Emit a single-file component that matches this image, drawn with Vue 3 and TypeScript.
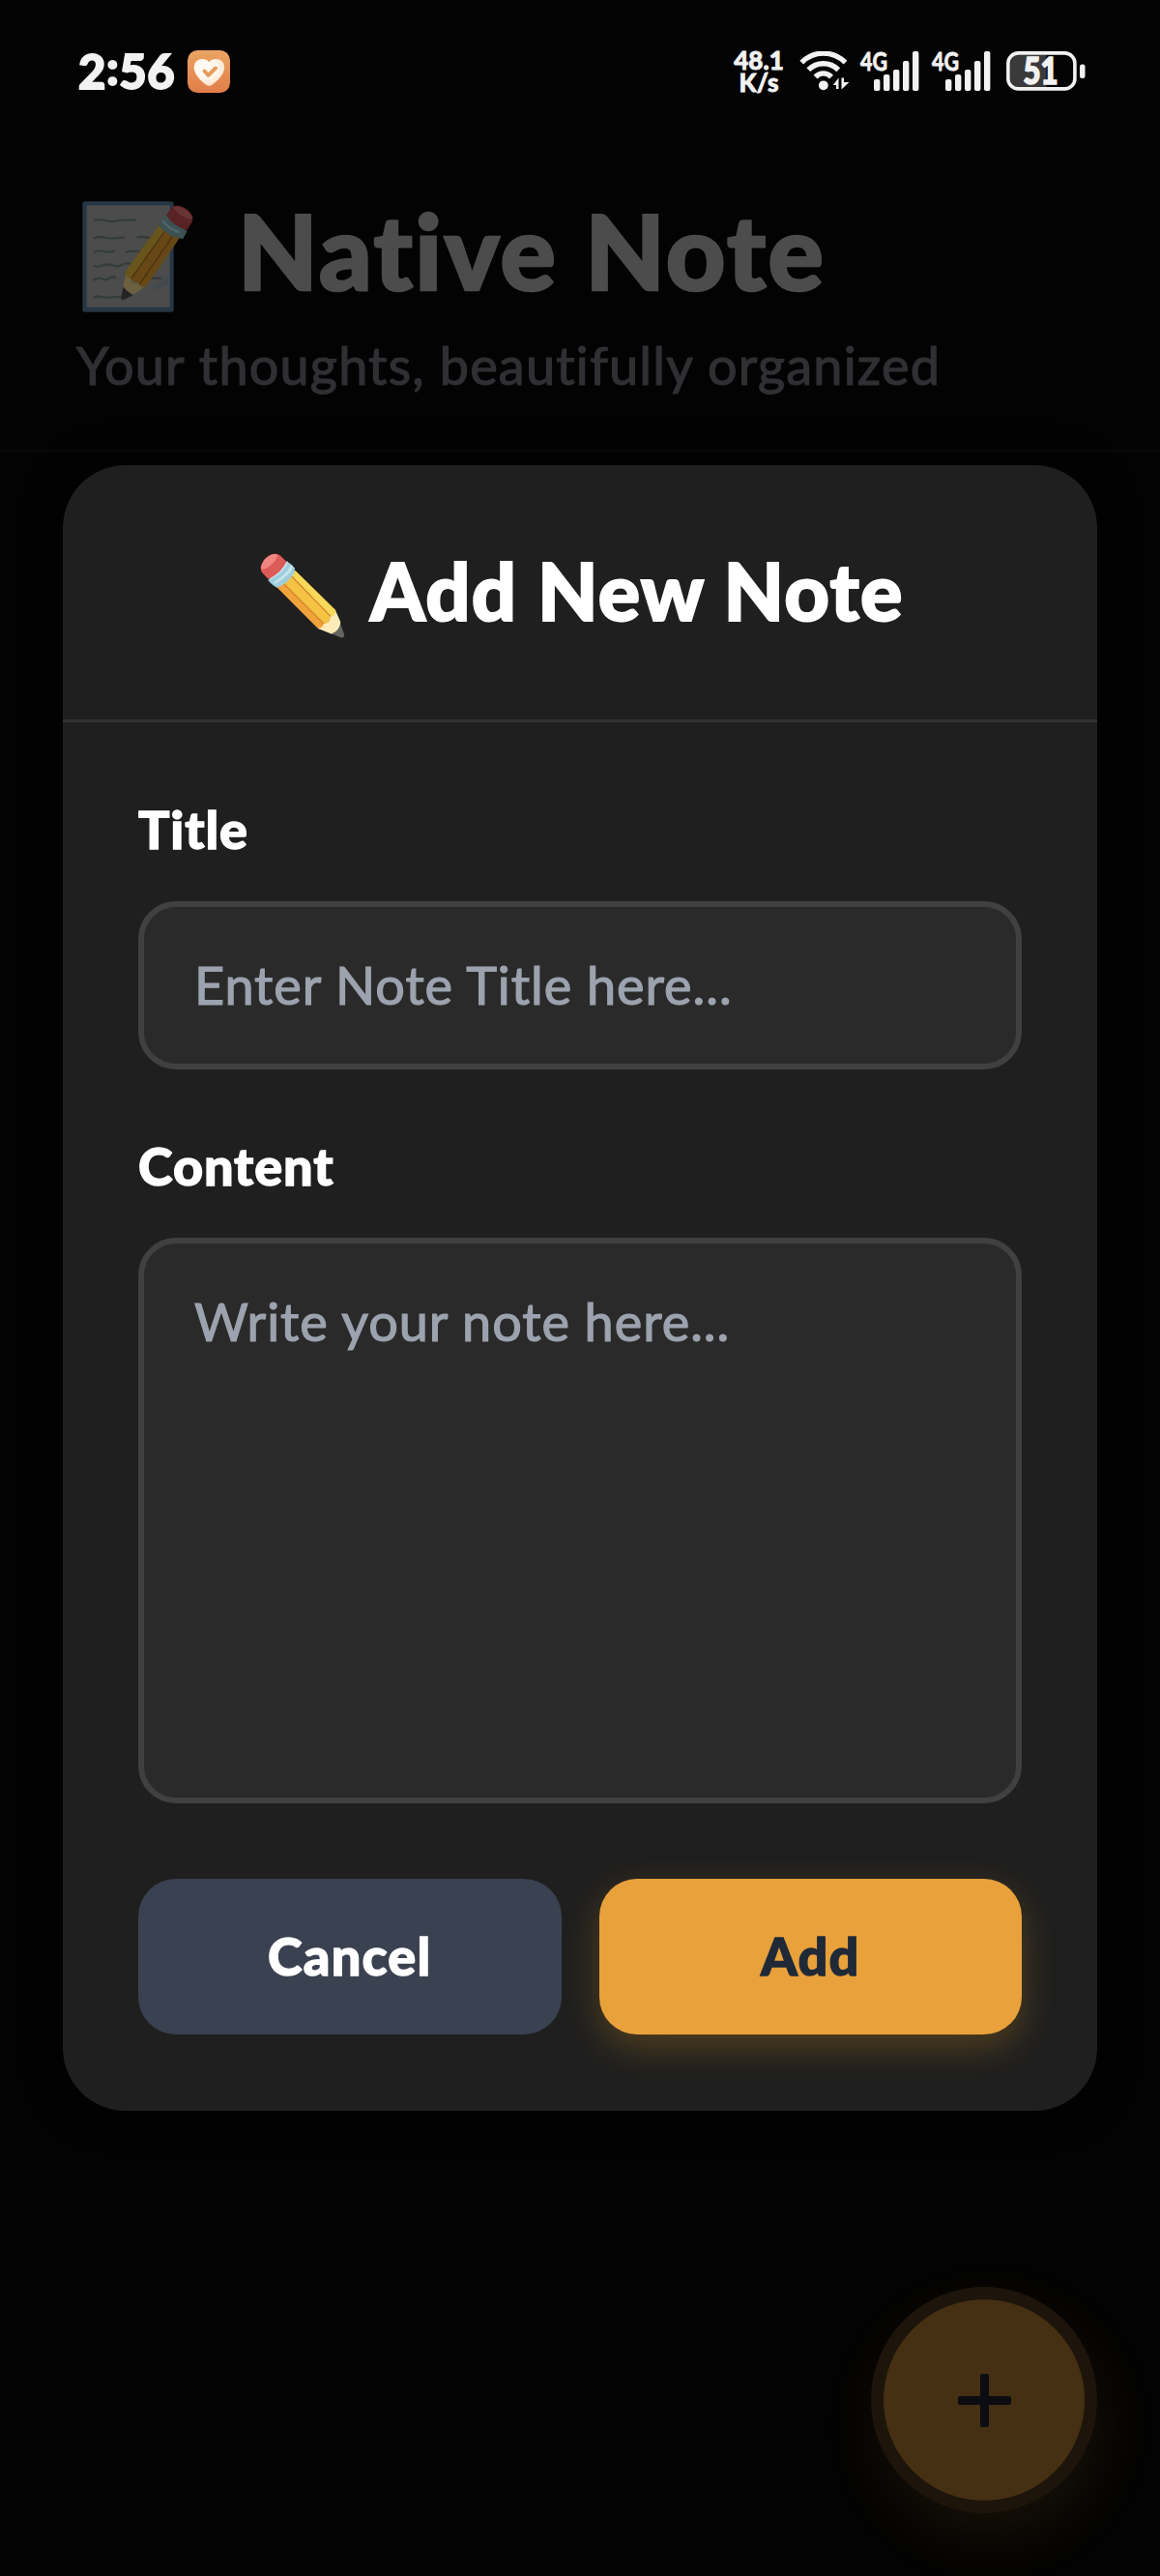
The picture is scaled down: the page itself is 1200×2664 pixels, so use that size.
<script setup lang="ts">
import { ref } from 'vue'

const title = ref<string>('')
const content = ref<string>('')

interface Bar {
  x: number
  y: number
}

const bars: Bar[] = [
  { x: 15, y: 29 },
  { x: 25, y: 24 },
  { x: 35, y: 19 },
  { x: 45, y: 10 },
  { x: 55, y: 0 },
]
const sims: string[] = ['4G', '4G']
</script>

<template>
  <div class="screen">
    <div class="status">
      <div class="clock">2<span class="colon">:</span>56</div>
      <svg class="health" viewBox="0 0 44 44">
        <defs>
          <linearGradient id="tile" x1="0" y1="0" x2="0" y2="1">
            <stop offset="0" stop-color="#eaa562" />
            <stop offset="1" stop-color="#e17d49" />
          </linearGradient>
          <radialGradient id="heart" cx=".4" cy=".35" r=".75">
            <stop offset=".4" stop-color="#fffaf3" />
            <stop offset="1" stop-color="#fbdcc0" />
          </radialGradient>
        </defs>
        <rect width="44" height="44" rx="10.5" fill="url(#tile)" />
        <path d="M22.300 12.300C18.500 7.500 10.500 8.300 7.600 13.500C3.800 21.500 12.500 31.500 20.300 36.200Q22.300 37.500 24.300 36.200C32.500 31.500 41 21.500 37.300 13.500C34.500 8.300 26 7.500 22.300 12.300Z" fill="url(#heart)" />
        <path d="M17.500 21.500L21.500 25.800L29 18.500" fill="none" stroke="#e69d5c" stroke-width="4" stroke-linecap="round" stroke-linejoin="round" />
      </svg>

      <div class="spacer"></div>

      <div class="speed">
        <span class="rate">48.1</span>
        <span class="unit">K/s</span>
      </div>
      <svg class="wifi" viewBox="0 0 52 41" fill="none" stroke="#f2f2f2">
        <path d="M2.200 11.600C15 -1 34.500 -1 47.500 11.600" stroke-width="5.400" />
        <path d="M9.300 19.200C18 10.600 31.500 10.600 40.300 19.200" stroke-width="5.400" />
        <path d="M16.600 26.600C21 21.600 28.500 21.600 33 26.600" stroke-width="5.400" />
        <circle cx="24.800" cy="35.300" r="4.900" fill="#f2f2f2" stroke="none" />
        <path d="M40.500 27.500V39H38V35H34.800ZM43.500 27.500V39.500L51.500 32H46V27.500Z" fill="#f2f2f2" stroke="none" />
      </svg>
      <svg v-for="(sim, i) in sims" :key="i" class="signal" viewBox="0 -10 62 61" fill="#f2f2f2">
        <text x="1" y="20" textLength="28" lengthAdjust="spacingAndGlyphs">{{ sim }}</text>
        <rect v-for="b in bars" :key="b.x" :x="b.x" :y="b.y" width="6.400" :height="41 - b.y" rx="2" />
      </svg>
      <svg class="battery" viewBox="0 -10 82 61">
        <path d="M13 4H41.500V37H13Q4 37 4 28V13Q4 4 13 4Z" fill="#3a3a3a" />
        <rect x="1.900" y="1.900" width="69" height="37" rx="10.500" fill="none" stroke="#f2f2f2" stroke-width="3.600" />
        <rect x="76" y="13.500" width="5.500" height="14.500" rx="2.500" fill="#f2f2f2" />
        <text x="17.500" y="33.700" textLength="36" lengthAdjust="spacingAndGlyphs">51</text>
      </svg>
    </div>

    <header class="header">
      <div class="brand">
        <svg class="memo" viewBox="75 84 346 346">
          <rect x="76" y="85" width="284" height="344" rx="8" fill="#273643" />
          <rect x="89" y="97" width="259" height="317" fill="#4c4c4c" />
          <path d="M202 391L275 370L348 308V345Z" fill="#424950" opacity=".7" />
          <g fill="none" stroke="#353c3b" stroke-width="7" stroke-linecap="round">
            <path d="M114 144Q130 139 146 144T178 146T210 143T240 142" />
            <path d="M114 199Q130 193 145 197T178 199T205 198M248 197Q262 193 285 198" />
            <path d="M114 242Q128 236 142 240T175 240M214 243Q228 237 254 241" />
            <path d="M114 286Q124 290 138 284T170 284T200 282T232 281" />
            <path d="M112 329Q126 320 138 326T160 324T178 322M290 324H320" />
            <path d="M112 384Q124 378 138 382T165 383T204 383" />
          </g>
          <path d="M317 156L378 199L276 347Q268 355 260 349L210 318Q208 308 213 298Z" fill="#664817" />
          <path d="M317 156L340 172L228 326L210 318Q208 308 213 298Z" fill="#67551c" />
          <path d="M338 170L228 324M361 187L254 342" stroke="#51300f" stroke-width="4" fill="none" />
          <path d="M210 315Q218 320 228 328Q230 342 250 340Q254 351 270 350L233 376L202 354Z" fill="#6b6040" />
          <path d="M203 350Q216 368 234 376L205 391Q195 394 196 384Z" fill="#242424" />
          <path d="M333 128L402 177L388 202Q340 195 314 160Q314 151 333 128Z" fill="#3d5053" />
          <path d="M325 145Q348 173 379 181" stroke="#526568" stroke-width="7" fill="none" />
          <path d="M337 128L354 104Q363 94 381 99Q408 107 419 132Q421 142 416 151L401 174Q358 163 337 128Z" fill="#592224" />
          <path d="M360 102Q374 97 397 111Q419 127 417 139Q402 143 382 128Q362 115 360 102Z" fill="#683434" />
        </svg>
        <h1>Native Note</h1>
      </div>
      <p>Your thoughts, beautifully organized</p>
    </header>

    <div class="modal">
      <div class="modal-head">
        <svg class="pencil" viewBox="686 334 264 264">
          <path d="M795 388L921 512L885 568Q872 573 862 564L738 440Z" fill="#f2a33a" />
          <path d="M795 388L921 512Q924 530 905 532L784 405Z" fill="#f7d859" />
          <path d="M784 406L905 530Q906 552 884 553L761 430Z" fill="#f4c343" />
          <path d="M784 406L905 530M761 430L884 553" stroke="#d1812e" stroke-width="3.500" fill="none" />
          <path d="M921 514L936 548L932 575L909 585L864 567Q880 568 884 553Q903 552 905 531Q919 529 921 514Z" fill="#fdecb9" />
          <path d="M936 554L947 585Q950 599 935 596L908 584Q928 578 936 554Z" fill="#63635f" />
          <path d="M767 360Q772 358 793 380Q796 389 788 402Q767 431 739 441Q728 438 711 419Z" fill="#9fcddc" />
          <path d="M773 360Q764 391 717 416L711 419L767 360ZM783 369Q773 395 728 425L733 429Q777 406 789 377Z" fill="#c5e7ee" />
          <path d="M768 361L748 341Q736 331 715 341Q693 354 688 378Q688 388 692 394L712 415Q752 396 768 361Z" fill="#dd5b57" />
          <path d="M738 338Q745 348 721 370Q700 388 689 383Q690 361 710 346Q727 333 738 338Z" fill="#f08682" />
        </svg>
        <h2>Add New Note</h2>
      </div>
      <form class="modal-body" @submit.prevent>
        <label for="note-title">Title</label>
        <input id="note-title" v-model="title" type="text" placeholder="Enter Note Title here..." />
        <label for="note-content" class="second">Content</label>
        <textarea id="note-content" v-model="content" placeholder="Write your note here..."></textarea>
        <div class="actions">
          <button type="button" class="cancel"><span>Cancel</span></button>
          <button type="submit" class="add"><span>Add</span></button>
        </div>
      </form>
    </div>

    <button type="button" class="fab" aria-label="Add note">
      <svg viewBox="0 0 55 55" fill="#0b0d12">
        <rect x="0" y="23" width="55" height="9" rx="2" />
        <rect x="23" y="0" width="9" height="55" rx="2" />
      </svg>
    </button>
  </div>
</template>

<style>
body {
  margin: 0;
  background: #030303;
}
</style>

<style scoped>
.screen {
  width: 1200px;
  height: 2664px;
  box-sizing: border-box;
  display: flex;
  flex-direction: column;
  background: #030303;
  color: #fff;
  font-family: Lato, "Liberation Sans", sans-serif;
  font-variant-ligatures: none;
  overflow: hidden;
}

.status {
  height: 148px;
  box-sizing: border-box;
  display: flex;
  align-items: flex-start;
  padding: 52px 77px 0 81px;
  color: #f2f2f2;
}

.clock {
  width: 113px;
  height: 44px;
  font-size: 49px;
  font-weight: 900;
  line-height: 43px;
  letter-spacing: 0.5px;
  white-space: nowrap;
  -webkit-text-stroke: 1.8px currentColor;
}

.colon {
  position: relative;
  top: -4px;
}

.health {
  width: 44px;
  height: 44px;
}

.spacer {
  flex: 1;
}

.speed {
  width: 54px;
  margin: -1px 15px 0 0;
  display: flex;
  flex-direction: column;
  align-items: center;
  font-size: 26px;
  font-weight: 900;
  line-height: 22.5px;
  -webkit-text-stroke: 0.8px currentColor;
}

.wifi {
  width: 52px;
  height: 41px;
  margin: 1px 10px 0 0;
}

.signal {
  width: 62px;
  height: 61px;
  margin: -9px 12px 0 0;
}

.signal text {
  font-size: 27px;
  font-weight: 700;
  stroke: #f2f2f2;
  stroke-width: 0.8px;
}

.battery {
  width: 82px;
  height: 61px;
  margin: -9px 0 0 4px;
}

.battery text {
  font-size: 37px;
  font-weight: 900;
  fill: #f2f2f2;
  stroke: #f2f2f2;
  stroke-width: 1.6px;
}

.header {
  height: 320px;
  box-sizing: border-box;
  flex: none;
  padding: 50px 78px 0;
  border-bottom: 3px solid #080808;
}

.brand {
  display: flex;
  align-items: flex-start;
  height: 130px;
}

.memo {
  width: 115px;
  height: 115px;
  margin: 10px 0 0 7px;
}

h1 {
  margin: 0 0 0 46px;
  font-size: 107px;
  font-weight: 900;
  line-height: 122px;
  letter-spacing: 2.5px;
  white-space: nowrap;
  color: #4c4c4c;
  -webkit-text-stroke: 2.6px #4c4c4c;
}

.header p {
  margin: 17px 0 0 1px;
  font-size: 54px;
  font-weight: 400;
  line-height: 66px;
  letter-spacing: 1.2px;
  white-space: nowrap;
  color: #303034;
  -webkit-text-stroke: 1.2px #303034;
}

.modal {
  width: 1070px;
  height: 1702px;
  box-sizing: border-box;
  flex: none;
  margin: 13px 65px 0;
  border-radius: 65px;
  background: #1f1f1f;
  box-shadow: 0 0 40px rgba(0, 0, 0, 0.6);
}

.modal-head {
  height: 266px;
  box-sizing: border-box;
  display: flex;
  align-items: flex-start;
  padding: 80px 0 0 204px;
  border-bottom: 3px solid #333;
}

.pencil {
  width: 88px;
  height: 88px;
  margin-top: 11px;
}

h2 {
  margin: 0 0 0 26px;
  font-size: 81px;
  font-weight: 900;
  line-height: 100px;
  letter-spacing: 1.3px;
  white-space: nowrap;
  -webkit-text-stroke: 2px #fff;
}

.modal-body {
  display: flex;
  flex-direction: column;
  padding: 79px 78px 0;
}

label {
  height: 65px;
  font-size: 54px;
  font-weight: 900;
  line-height: 64px;
  letter-spacing: 0.9px;
  -webkit-text-stroke: 1.3px #fff;
}

label.second {
  margin-top: 68px;
}

input,
textarea {
  width: 100%;
  box-sizing: border-box;
  margin: 41px 0 0;
  border: 6px solid #404040;
  border-radius: 39px;
  outline: none;
  background: #2a2a2a;
  color: #fff;
  font-family: inherit;
  font-size: 54px;
  font-weight: 400;
  line-height: 66px;
  letter-spacing: 0.95px;
  resize: none;
}

input {
  height: 174px;
  padding: 0 52px 1px;
}

textarea {
  height: 585px;
  padding: 48px 52px;
  overflow: hidden;
}

input::placeholder,
textarea::placeholder {
  color: #9ca3af;
  opacity: 1;
  -webkit-text-stroke: 1.2px #9ca3af;
}

.actions {
  display: flex;
  gap: 39px;
  margin-top: 78px;
}

.actions button {
  flex: 1;
  height: 161px;
  padding: 0 0 2px;
  border: 0;
  border-radius: 39px;
  font-family: inherit;
  font-size: 54px;
  font-weight: 900;
  line-height: 64px;
  letter-spacing: 1.2px;
  -webkit-text-stroke: 1.3px currentColor;
}

.cancel {
  background: #3a4150;
  color: #fff;
}

.actions .add {
  background: #e8a13b;
  color: #1f2937;
  box-shadow: 0 13px 36px rgba(232, 161, 27, 0.25);
}

.fab {
  width: 234px;
  height: 234px;
  flex: none;
  box-sizing: border-box;
  display: flex;
  align-items: center;
  justify-content: center;
  align-self: flex-end;
  margin: 182px 65px 0 0;
  padding: 0;
  border: 13px solid #1d150a;
  border-radius: 50%;
  background: #453013;
  box-shadow: 6px 26px 64px rgba(232, 161, 59, 0.09);
}

.fab svg {
  width: 55px;
  height: 55px;
}
</style>
